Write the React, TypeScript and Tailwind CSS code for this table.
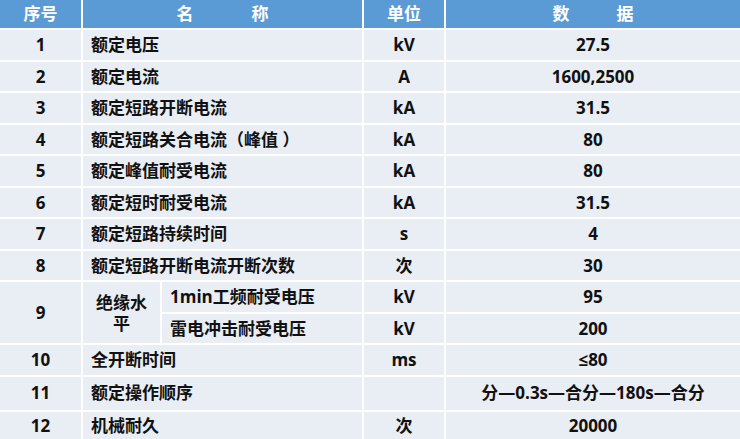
import React from "react";

type Row = { no: string; name: string; unit: string; value: string };

const rows: Row[] = [
  { no: "1", name: "额定电压", unit: "kV", value: "27.5" },
  { no: "2", name: "额定电流", unit: "A", value: "1600,2500" },
  { no: "3", name: "额定短路开断电流", unit: "kA", value: "31.5" },
  { no: "4", name: "额定短路关合电流（峰值 ）", unit: "kA", value: "80" },
  { no: "5", name: "额定峰值耐受电流", unit: "kA", value: "80" },
  { no: "6", name: "额定短时耐受电流", unit: "kA", value: "31.5" },
  { no: "7", name: "额定短路持续时间", unit: "s", value: "4" },
  { no: "8", name: "额定短路开断电流开断次数", unit: "次", value: "30" },
];

const tail: Row[] = [
  { no: "10", name: "全开断时间", unit: "ms", value: "≤80" },
  { no: "11", name: "额定操作顺序", unit: "", value: "分—0.3s—合分—180s—合分" },
  { no: "12", name: "机械耐久", unit: "次", value: "20000" },
];

const cell = "bg-[#e9edf4] flex items-center";

function BodyRow({ r }: { r: Row }) {
  return (
    <>
      <div className={`${cell} justify-center`}>{r.no}</div>
      <div className={`${cell} col-span-2 pl-2`}>{r.name}</div>
      <div className={`${cell} justify-center`}>{r.unit}</div>
      <div className={`${cell} justify-center`}>{r.value}</div>
    </>
  );
}

export default function App() {
  return (
    <div
      className="w-[740px] h-[439px] bg-white grid gap-[2px] grid-cols-[81px_77px_200px_80px_1fr] grid-rows-[28px_repeat(11,29.5px)_33px_1fr] text-[17px] font-bold text-[#111]"
      style={{ fontFamily: '"Open Sans", "Noto Sans CJK SC", sans-serif' }}
    >
      {/* Header */}
      <div className="bg-[#5b9bd5] text-white flex items-center justify-center">序号</div>
      <div className="bg-[#5b9bd5] text-white col-span-2 flex items-center justify-center gap-[58px]">
        <span>名</span>
        <span>称</span>
      </div>
      <div className="bg-[#5b9bd5] text-white flex items-center justify-center">单位</div>
      <div className="bg-[#5b9bd5] text-white flex items-center justify-center gap-[47px]">
        <span>数</span>
        <span>据</span>
      </div>

      {rows.map((r) => (
        <BodyRow key={r.no} r={r} />
      ))}

      {/* Row 9: insulation level */}
      <div className={`${cell} row-span-2 justify-center`}>9</div>
      <div className={`${cell} row-span-2 justify-center text-center px-2 leading-[21px]`}>绝缘水平</div>
      <div className={`${cell} pl-2`}>1min工频耐受电压</div>
      <div className={`${cell} justify-center`}>kV</div>
      <div className={`${cell} justify-center`}>95</div>
      <div className={`${cell} pl-2`}>雷电冲击耐受电压</div>
      <div className={`${cell} justify-center`}>kV</div>
      <div className={`${cell} justify-center`}>200</div>

      {tail.map((r) => (
        <BodyRow key={r.no} r={r} />
      ))}
    </div>
  );
}
